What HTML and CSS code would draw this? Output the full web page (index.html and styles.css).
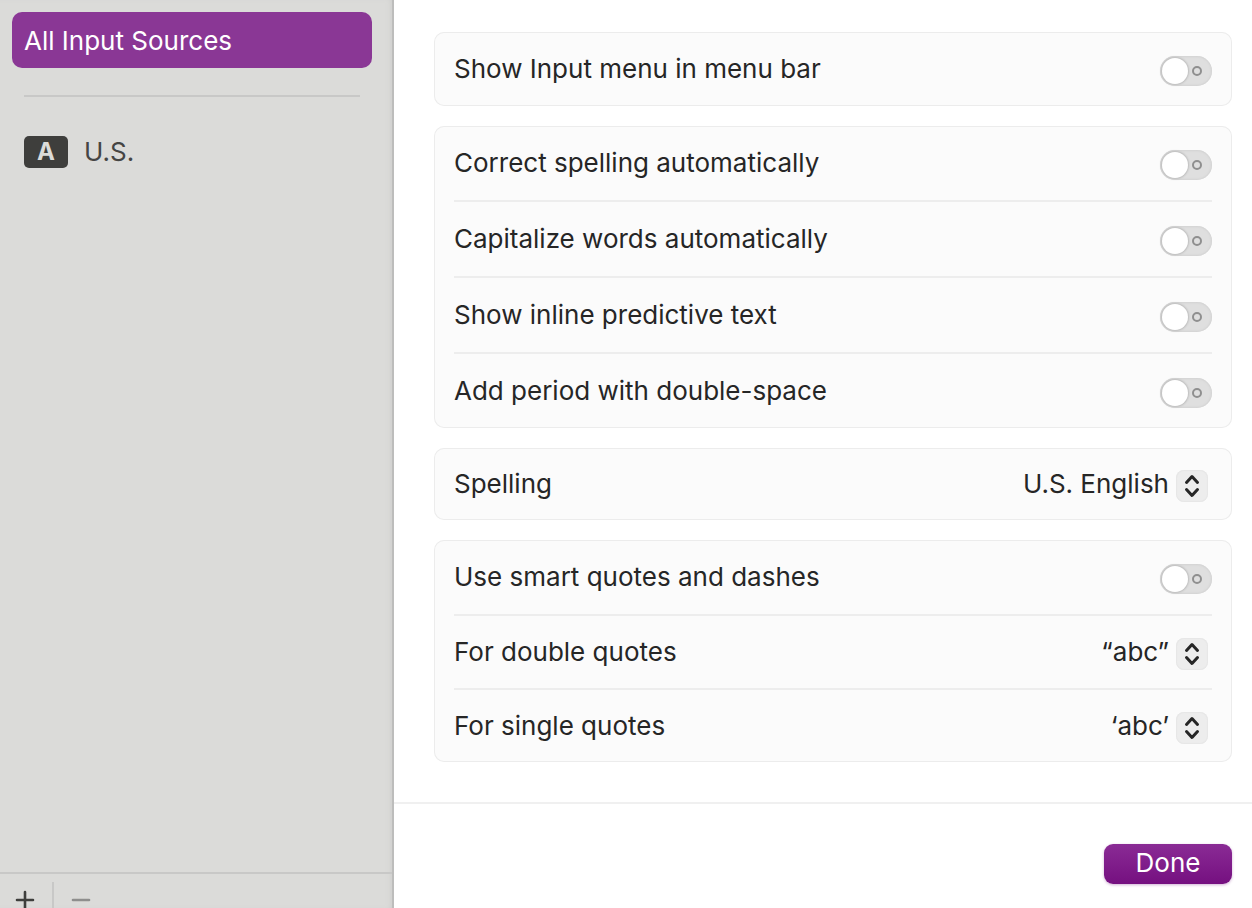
FILE: index.html
```html
<!DOCTYPE html>
<html lang="en">

<head>
  <meta charset="UTF-8">
  <meta name="viewport" content="width=device-width, initial-scale=1.0">
  <title>Input Sources</title>
  <link rel="stylesheet" href="styles.css">
</head>

<body>
  <div class="window">
    <aside class="sidebar">
      <nav class="sources">
        <button type="button" class="source selected">All Input Sources</button>
        <hr class="sources-line">
        <button type="button" class="source"><span class="badge">A</span>U.S.</button>
      </nav>
      <div class="toolbar">
        <button type="button" class="tool" aria-label="Add input source">
          <svg width="20" height="20" viewBox="0 0 20 20"><path d="M2 10H18M10 2V18" /></svg>
        </button>
        <span class="tool-line"></span>
        <button type="button" class="tool" aria-label="Remove input source" disabled>
          <svg width="20" height="20" viewBox="0 0 20 20"><path d="M2 10H18" /></svg>
        </button>
      </div>
    </aside>

    <main class="content">
      <form class="settings">
        <section class="card">
          <div class="row">
            <label for="inputMenu">Show Input menu in menu bar</label>
            <input type="checkbox" class="switch" id="inputMenu">
          </div>
        </section>

        <section class="card">
          <div class="row">
            <label for="correct">Correct spelling automatically</label>
            <input type="checkbox" class="switch" id="correct">
          </div>
          <div class="row">
            <label for="capitalize">Capitalize words automatically</label>
            <input type="checkbox" class="switch" id="capitalize">
          </div>
          <div class="row">
            <label for="predictive">Show inline predictive text</label>
            <input type="checkbox" class="switch" id="predictive">
          </div>
          <div class="row">
            <label for="period">Add period with double-space</label>
            <input type="checkbox" class="switch" id="period">
          </div>
        </section>

        <section class="card">
          <div class="row row-select">
            <label for="spelling">Spelling</label>
            <div class="popup">
              <select id="spelling">
                <option>U.S. English</option>
              </select>
              <svg class="arrows" width="32" height="32" viewBox="0 0 32 32"><path d="M10.5 12.5L16 6.5L21.5 12.5M10.5 19.5L16 25.5L21.5 19.5" /></svg>
            </div>
          </div>
        </section>

        <section class="card">
          <div class="row">
            <label for="smart">Use smart quotes and dashes</label>
            <input type="checkbox" class="switch" id="smart">
          </div>
          <div class="row row-select">
            <label for="doubleQuotes">For double quotes</label>
            <div class="popup">
              <select id="doubleQuotes">
                <option>“abc”</option>
              </select>
              <svg class="arrows" width="32" height="32" viewBox="0 0 32 32"><path d="M10.5 12.5L16 6.5L21.5 12.5M10.5 19.5L16 25.5L21.5 19.5" /></svg>
            </div>
          </div>
          <div class="row row-select">
            <label for="singleQuotes">For single quotes</label>
            <div class="popup">
              <select id="singleQuotes">
                <option>‘abc’</option>
              </select>
              <svg class="arrows" width="32" height="32" viewBox="0 0 32 32"><path d="M10.5 12.5L16 6.5L21.5 12.5M10.5 19.5L16 25.5L21.5 19.5" /></svg>
            </div>
          </div>
        </section>
      </form>

      <footer class="actions">
        <button type="button" class="done">Done</button>
      </footer>
    </main>
  </div>
</body>

</html>
```
FILE: styles.css
```css
*,
*::before,
*::after {
  box-sizing: border-box;
}

body {
  margin: 0;
  font-family: Inter, "Liberation Sans", sans-serif;
  font-size: 26px;
  line-height: 32px;
  color: #262626;
  background-color: #fff;
}

button,
select {
  font: inherit;
  color: inherit;
  border: none;
  background: none;
}

.window {
  display: flex;
  min-height: 100vh;
}

/* Sidebar */
.sidebar {
  display: flex;
  flex-direction: column;
  flex: 0 0 394px;
  background-color: #dbdbd9;
  box-shadow: inset -2px 0 #bdbdbc, inset -6px 0 6px -4px #c8c8c7;
}

.sources {
  flex: 1;
  padding: 12px 22px 12px 12px;
}

.source {
  display: flex;
  align-items: center;
  gap: 16px;
  width: 100%;
  height: 56px;
  padding: 0 12px;
  border-radius: 10px;
  color: #454544;
  text-align: left;
}

.selected {
  padding-top: 2px;
  color: #fff;
  background-color: #8a3795;
}

.sources-line {
  height: 2px;
  margin: 27px 12px;
  border: none;
  background-color: #c8c8c7;
}

.badge {
  width: 44px;
  height: 32px;
  border-radius: 5px;
  background-color: #3e3e3c;
  color: #dbdbd9;
  font-size: 24px;
  font-weight: 700;
  text-align: center;
}

.toolbar {
  display: flex;
  height: 36px;
  margin-right: 2px;
  overflow: hidden;
  border-top: 2px solid #c8c8c7;
}

.tool {
  flex: none;
  height: 52px;
  padding: 0 16px 0 15px;
}

.tool svg {
  display: block;
  fill: none;
  stroke: #3e3e3c;
  stroke-width: 2.6;
  stroke-linecap: round;
}

.tool:disabled svg {
  stroke: #8e8e8d;
}

.tool-line {
  width: 2px;
  margin: 8px 2px 0 1px;
  background-color: #c8c8c7;
}

/* Settings */
.content {
  display: flex;
  flex-direction: column;
  flex: 1;
  min-width: 0;
}

.settings {
  display: flex;
  flex-direction: column;
  flex: 1;
  gap: 20px;
  padding: 32px 20px 40px 40px;
}

.card {
  padding: 0 20px;
  border-radius: 10px;
  background-color: #fbfbfb;
  box-shadow: inset 0 0 0 1px #ececec;
}

.row {
  display: flex;
  justify-content: space-between;
  padding: 21px 0 20px;
}

.row + .row {
  border-top: 2px solid #ededed;
}

.row-select {
  padding: 20px 0 18px;
}

.switch {
  position: relative;
  appearance: none;
  width: 52px;
  height: 30px;
  margin: 3px 0 0;
  border-radius: 15px;
  background-color: #dfdfdf;
  box-shadow: inset 0 0 2px 1px #d2d2d2;
}

.switch::before,
.switch::after {
  content: "";
  position: absolute;
  border-radius: 50%;
}

.switch::before {
  top: 2px;
  left: 2px;
  width: 26px;
  height: 26px;
  background-color: #fff;
  box-shadow: 0 0 2px 1px #bcbcbc;
}

.switch::after {
  top: 10px;
  right: 10px;
  width: 10px;
  height: 10px;
  border: 2px solid #8f8f8f;
}

.switch:checked {
  background-color: #8a3795;
}

.switch:checked::before {
  left: 24px;
}

.switch:checked::after {
  display: none;
}

/* Text and arrows share one grid cell */
.popup {
  display: grid;
  align-items: start;
  margin-right: 4px;
}

.popup select {
  grid-area: 1 / 1;
  appearance: none;
  height: 32px;
  padding: 0 39px 0 0;
  text-align-last: right;
}

.arrows {
  grid-area: 1 / 1;
  justify-self: end;
  margin-top: 2px;
  border-radius: 8px;
  background-color: #ededed;
  box-shadow: inset 0 0 1px 1px #e6e6e6;
  fill: none;
  stroke: #262626;
  stroke-width: 3;
  stroke-linecap: round;
  stroke-linejoin: round;
  pointer-events: none;
}

.actions {
  display: flex;
  justify-content: flex-end;
  padding: 40px 20px 24px;
  border-top: 2px solid #f0f0f0;
}

.done {
  width: 128px;
  height: 40px;
  padding: 0 0 2px;
  border-radius: 9px;
  background-image: linear-gradient(#8a2b95, #751080);
  box-shadow: 0 1px 3px #d0b0d4;
  color: #fff;
}
```
